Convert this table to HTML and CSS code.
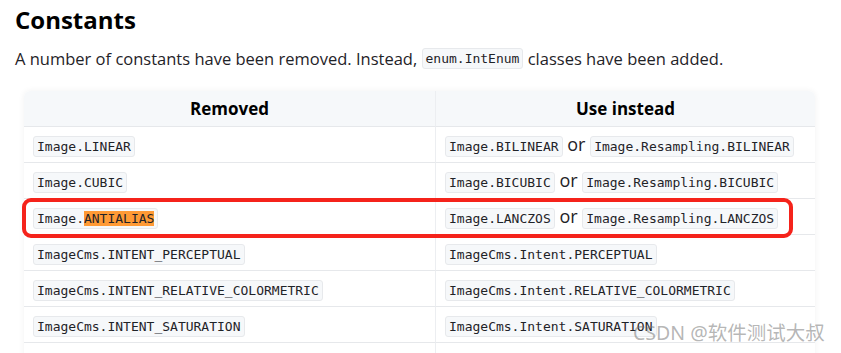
FILE: index.html
```html
<!DOCTYPE html>
<html>
<head>
<meta charset="utf-8">
<link rel="stylesheet" href="styles.css">
</head>
<body>
<div class="page">
  <h2 class="title">Constants</h2>
  <p class="lead">A number of constants have been removed. Instead, <code class="c">enum.IntEnum</code> classes have been added.</p>
  <div class="tablewrap">
    <table class="tbl">
      <thead>
        <tr><th class="col1">Removed</th><th class="col2">Use instead</th></tr>
      </thead>
      <tbody>
        <tr><td><code class="c">Image.LINEAR</code></td><td><code class="c">Image.BILINEAR</code> or <code class="c">Image.Resampling.BILINEAR</code></td></tr>
        <tr><td><code class="c">Image.CUBIC</code></td><td><code class="c">Image.BICUBIC</code> or <code class="c">Image.Resampling.BICUBIC</code></td></tr>
        <tr><td><code class="c">Image.<span class="hl">ANTIALIAS</span></code></td><td><code class="c">Image.LANCZOS</code> or <code class="c">Image.Resampling.LANCZOS</code></td></tr>
        <tr><td><code class="c">ImageCms.INTENT_PERCEPTUAL</code></td><td><code class="c">ImageCms.Intent.PERCEPTUAL</code></td></tr>
        <tr><td><code class="c">ImageCms.INTENT_RELATIVE_COLORMETRIC</code></td><td><code class="c">ImageCms.Intent.RELATIVE_COLORMETRIC</code></td></tr>
        <tr><td><code class="c">ImageCms.INTENT_SATURATION</code></td><td><code class="c">ImageCms.Intent.SATURATION</code></td></tr>
        <tr><td>&nbsp;</td><td>&nbsp;</td></tr>
      </tbody>
    </table>
    <div class="mark"></div>
  </div>
  <div class="watermark">CSDN @软件测试大叔</div>
</div>
</body>
</html>
```
FILE: styles.css
```css
html, body {
  margin: 0;
  padding: 0;
  background: #ffffff;
  overflow: hidden;
}
.page {
  position: relative;
  width: 841px;
  height: 353px;
  overflow: hidden;
  padding: 0 0 0 15px;
  box-sizing: border-box;
  font-family: "Open Sans", "Noto Sans", sans-serif;
  color: #1f2328;
}
.title {
  margin: 0;
  padding-top: 3px;
  font-size: 24px;
  line-height: 34px;
  font-weight: 700;
  color: #000;
}
.lead {
  margin: 8px 0 0 0;
  font-size: 16.5px;
  line-height: 28px;
  color: #1f2328;
}
.c {
  font-family: "DejaVu Sans Mono", "Liberation Mono", monospace;
  font-size: 13px;
  line-height: 19px;
  display: inline-block;
  padding: 0 3px;
  background: #f6f8fa;
  border: 1px solid #e7e9ec;
  border-radius: 3px;
  color: #1f2328;
  vertical-align: middle;
}
.lead .c {
  position: relative;
  top: -2px;
}
.hl {
  background: #ff9a35;
}
.tablewrap {
  position: relative;
  margin: 18px 0 0 9px;
  width: 791px;
}
.tbl {
  width: 791px;
  border-collapse: separate;
  border-spacing: 0;
  border-radius: 6px;
  box-shadow: 0 0 6px rgba(0, 0, 0, 0.06);
  overflow: hidden;
}
.tbl th {
  background: #f6f8fa;
  font-size: 17px;
  font-weight: 700;
  height: 35px;
  padding: 0;
  text-align: center;
  color: #000;
  border-bottom: 1px solid #e6e8eb;
}
.col1 { width: 411px; }
.col1, .tbl td:first-child {
  border-right: 1px solid #eceef1;
}
.tbl td {
  height: 35px;
  padding: 0 0 0 9px;
  font-size: 18px;
  border-bottom: 1px solid #e6e8eb;
  color: #1f2328;
  white-space: nowrap;
}
.mark {
  position: absolute;
  left: -2px;
  top: 107px;
  width: 771px;
  height: 40px;
  box-sizing: border-box;
  border: 4px solid #f5231b;
  border-radius: 9px;
}
.watermark {
  position: absolute;
  left: 633px;
  top: 317px;
  font-family: "Noto Sans", "Noto Sans CJK SC", sans-serif;
  font-size: 19.5px;
  color: rgba(120, 120, 120, 0.55);
  white-space: nowrap;
}
```
